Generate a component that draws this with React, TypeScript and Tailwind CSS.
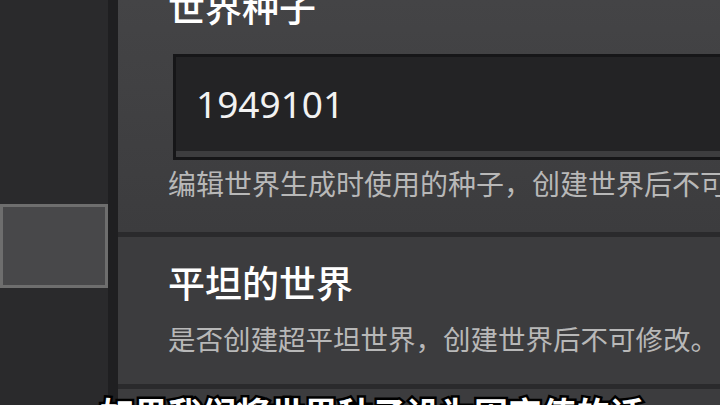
import React from 'react';

const cjk = "font-['Noto_Sans_CJK_SC','Noto_Sans',sans-serif]";

export default function App() {
  return (
    <div className={`relative flex h-[405px] w-[720px] overflow-hidden bg-[#2b2b2d] ${cjk}`}>
      {/* Left nav column */}
      <div className="w-[108px] shrink-0 bg-[#2a2a2c]">
        <div className="mt-[204px] h-[84px] border-[3px] border-[#6e6e6e] bg-[#48484a]" />
      </div>
      <div className="w-[10px] shrink-0 bg-[#1f1f21]" />

      {/* Settings list */}
      <div className="flex min-w-0 flex-1 flex-col overflow-hidden">
        {/* World seed */}
        <div className="h-[232px] shrink-0 bg-gradient-to-b from-[#444446] to-[#3c3c3e] pl-[50px]">
          <div className="mt-[-12px] text-[37px] font-medium leading-none text-white">世界种子</div>
          <div className="ml-[5px] mt-[29px] flex h-[106px] w-[620px] flex-col border-[3px] border-[#161618] bg-[#232325]">
            <div className="flex flex-1 items-center pl-[20px] font-['Noto_Sans',sans-serif] text-[37px] text-[#f2f2f2]">
              1949101
            </div>
            <div className="h-[6px] bg-[#3d3d3f]" />
          </div>
          <div className="mt-[9px] whitespace-nowrap text-[28px] leading-none text-[#b8b8b8]">
            编辑世界生成时使用的种子，创建世界后不可修改。
          </div>
        </div>
        <div className="h-[5px] shrink-0 bg-[#2a2a2c]" />

        {/* Flat world */}
        <div className="h-[147px] shrink-0 bg-[#3c3c3e] pl-[50px] pt-[27px]">
          <div className="text-[37px] font-medium leading-none text-white">平坦的世界</div>
          <div className="mt-[24px] whitespace-nowrap text-[27.5px] leading-none text-[#b8b8b8]">
            是否创建超平坦世界，创建世界后不可修改。
          </div>
        </div>
        <div className="h-[5px] shrink-0 bg-[#2a2a2c]" />
        <div className="flex-1 bg-[#3c3c3e]" />
      </div>

      {/* Video subtitle */}
      <div className="absolute left-[100px] top-[396px] whitespace-nowrap text-[34px] font-bold leading-none text-white [-webkit-text-stroke:5px_#000] [paint-order:stroke_fill]">
        如果我们将世界种子设为固定值的话
      </div>
    </div>
  );
}
